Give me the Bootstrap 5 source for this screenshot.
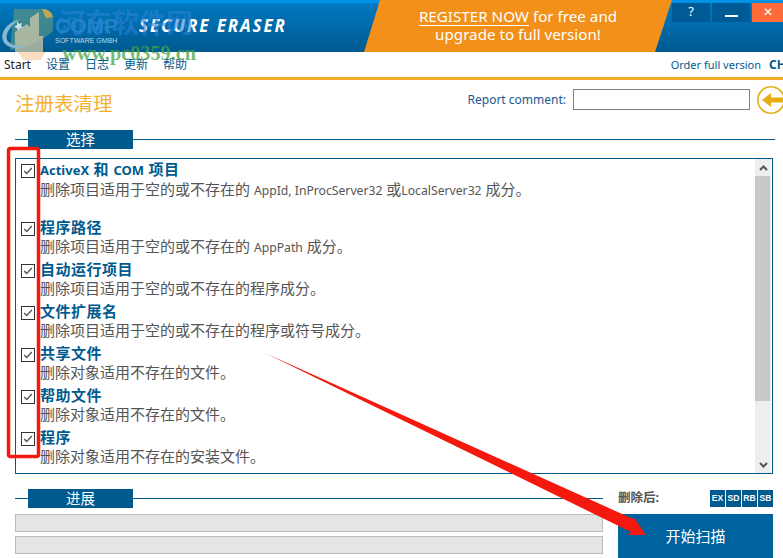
<!DOCTYPE html>
<html lang="zh">
<head>
    <meta charset="UTF-8">
    <meta name="viewport" content="width=device-width, initial-scale=1.0">
    <title>Secure Eraser</title>
    <link href="https://cdn.jsdelivr.net/npm/bootstrap@5.3.0/dist/css/bootstrap.min.css" rel="stylesheet">
    <style>
        body {
            margin: 0;
            background: #fff;
            font-family: "Noto Sans", "Noto Sans CJK SC", sans-serif;
            font-size: 12px;
            color: #555;
        }
        .app-window { width: 783px; height: 558px; overflow: hidden; }

        .top-banner {
            height: 52px;
            background: linear-gradient(#0090e4 0, #0090e4 3px, #0078bf 4px, #005a90 100%);
        }
        .brand-block { width: 364px; padding-left: 55px; }
        .brand-comp { font: bold 21px/1 "Liberation Sans", sans-serif; color: #1f86c6; width: 84px; margin-top: 15px; }
        .brand-sub { font: 7px/1 "Liberation Sans", sans-serif; color: #bcd6e8; margin-top: 1px; white-space: nowrap; }
        .brand-name { font: italic bold 17px/1 "Open Sans", sans-serif; letter-spacing: 1.9px; color: #fff; margin-top: 17px; white-space: nowrap; }
        .promo {
            width: 308px;
            background: #f29019;
            clip-path: polygon(16px 0, 100% 0, 291px 100%, 0 100%);
            color: #fff;
            font-size: 15.2px;
            line-height: 18px;
            text-align: center;
            padding-top: 7px;
        }
        .promo u { text-underline-offset: 3px; text-decoration-thickness: 1px; }
        .win-btns { padding-top: 3px; gap: 2px; flex: 1; }
        .win-btn { width: 38px; height: 19px; background: #005a96; color: #fff; text-align: center; font-size: 13px; line-height: 17px; }
        .win-btn.win-close { width: 31px; background: #ff6a39; font-size: 12px; }
        .win-dash { width: 13px; height: 2px; background: #fff; margin-top: 12px; }

        .menu-strip { height: 28px; border-bottom: 3px solid #f2ac28; padding: 0 0 0 4px; line-height: 25px; }
        .menu-strip a { color: #005a8e; text-decoration: none; width: 39px; }
        .menu-strip a.menu-first { color: #222; width: 42px; }
        .order-link { color: #005a8e; font-size: 11px; margin-left: auto; margin-right: 8px; white-space: nowrap; }
        .lang-code { color: #005a8e; font-weight: 700; width: 14px; overflow: hidden; }

        .title-row { height: 50px; padding: 9px 0 0 15px; }
        .page-title { font-size: 19.5px; line-height: 30px; color: #f5b02e; }
        .report-label { color: #1d5a92; margin-left: auto; line-height: 21px; margin-right: 7px; }
        .report-input { width: 177px; height: 21px; border: 1px solid #808080; margin-right: 6px; }
        .back-icon { margin-top: -3px; flex: none; }

        .sect-head { height: 19px; padding-left: 15px; }
        .sect-line { height: 1px; background: #005a8e; }
        .sect-line.sect-start { width: 13px; }
        .sect-label { width: 105px; height: 19px; line-height: 18px; background: #005a8e; color: #fff; text-align: center; font-size: 14.5px; }

        .items-box { width: 758px; height: 316px; margin: 9px 0 15px 15px; border: 1px solid #005a8e; }
        .items-list { padding: 0 0 0 5px; }
        .scan-item { height: 42px; gap: 5px; }
        .scan-item.scan-tall { height: 58px; }
        .scan-item .form-check-input {
            width: 14px; height: 14px; margin: 5px 0 0 0; flex: none;
            border: 1px solid #333; border-radius: 0; background-color: #fff;
            background-image: url("data:image/svg+xml,%3csvg xmlns='http://www.w3.org/2000/svg' viewBox='0 0 14 14'%3e%3cpath fill='none' stroke='%23555' stroke-width='1.6' d='M2.5 7l3 3 6-6.5'/%3e%3c/svg%3e");
            background-size: 100% 100%;
        }
        .item-name { color: #005a8e; font-weight: 700; font-size: 15px; letter-spacing: .5px; line-height: 20px; white-space: nowrap; }
        .item-name span { font-size: 13px; letter-spacing: 0; }
        .item-desc { color: #555; font-size: 15px; line-height: 18px; white-space: nowrap; }
        .item-desc span { font-size: 12.2px; }

        .fake-scroll { width: 16px; background: #eee; margin-right: 1px; }
        .scroll-end { height: 17px; }
        .scroll-thumb { height: 225px; background: #c8c8c8; width: 15px; }

        .lower-left { width: 588px; margin-left: 15px; }
        .lower-left .sect-head { padding-left: 0; }
        .meter { height: 18px; background: #e5e5e5; border: 1px solid #bbb; margin-top: 4px; }
        .meter-first { margin-top: 6px; }
        .lower-right { width: 155px; margin-left: 15px; }
        .after-row { height: 19px; }
        .after-label { font-weight: 700; font-size: 12.5px; color: #555; }
        .tag-row { gap: 1px; margin-left: auto; }
        .tag-box { width: 15px; height: 17px; background: #005a8e; color: #fff; font: bold 8.5px/17px "Liberation Sans", sans-serif; text-align: center; }
        .scan-btn {
            width: 155px; height: 44px; margin-top: 6px;
            background: #00629f; border: 0; border-radius: 0; color: #fff; font-size: 15px;
        }

        .overlay-wrap { position: relative; }
        .overlay-art { position: absolute; left: 0; top: 0; pointer-events: none; }
        .mark-cn { position: absolute; left: 58px; top: 7px; font-size: 27px; font-weight: 700; line-height: 32px; color: rgba(40, 130, 215, .6); pointer-events: none; white-space: nowrap; }
        .mark-url { position: absolute; left: 62px; top: 41px; font: bold 20.300px/24px "Liberation Serif", serif; color: rgba(70, 165, 70, .75); pointer-events: none; white-space: nowrap; }
    </style>
</head>
<body>
<div class="app-window overlay-wrap">
    <!-- banner -->
    <div class="top-banner d-flex">
        <div class="brand-block d-flex">
            <div>
                <div class="brand-comp">COMP</div>
                <div class="brand-sub">SOFTWARE GMBH</div>
            </div>
            <div class="brand-name">SECURE ERASER</div>
        </div>
        <div class="promo"><u>REGISTER NOW</u> for free and<br>upgrade to full version!</div>
        <div class="win-btns d-flex">
            <div class="win-btn">?</div>
            <div class="win-btn d-flex justify-content-center"><div class="win-dash"></div></div>
            <div class="win-btn win-close">&#10005;</div>
        </div>
    </div>

    <!-- menu -->
    <div class="menu-strip d-flex">
        <a class="menu-first" href="#">Start</a>
        <a href="#">设置</a>
        <a href="#">日志</a>
        <a href="#">更新</a>
        <a href="#">帮助</a>
        <span class="order-link">Order full version</span>
        <span class="lang-code">CH</span>
    </div>

    <div class="title-row d-flex">
        <div class="page-title">注册表清理</div>
        <div class="report-label">Report comment:</div>
        <input class="report-input" type="text">
        <svg class="back-icon" width="27" height="30" viewBox="0 0 27 30">
            <circle cx="15" cy="14" r="13.2" fill="#fff" stroke="#e6ad14" stroke-width="1.6"/>
            <path d="M6 14l9-7v4.500h12v5H15V21z" fill="#e6ad14"/>
        </svg>
    </div>

    <!-- 选择 -->
    <div class="sect-head d-flex align-items-center">
        <div class="sect-line sect-start"></div>
        <div class="sect-label">选择</div>
        <div class="sect-line flex-grow-1 me-2"></div>
    </div>

    <div class="items-box d-flex">
        <div class="items-list flex-grow-1">
            <div class="scan-item scan-tall d-flex">
                <input class="form-check-input" type="checkbox" checked>
                <div>
                    <div class="item-name"><span>ActiveX</span> 和 <span>COM</span> 项目</div>
                    <div class="item-desc">删除项目适用于空的或不存在的 <span>AppId, InProcServer32</span> 或<span>LocalServer32</span> 成分。</div>
                </div>
            </div>
            <div class="scan-item d-flex">
                <input class="form-check-input" type="checkbox" checked>
                <div>
                    <div class="item-name">程序路径</div>
                    <div class="item-desc">删除项目适用于空的或不存在的 <span>AppPath</span> 成分。</div>
                </div>
            </div>
            <div class="scan-item d-flex">
                <input class="form-check-input" type="checkbox" checked>
                <div>
                    <div class="item-name">自动运行项目</div>
                    <div class="item-desc">删除项目适用于空的或不存在的程序成分。</div>
                </div>
            </div>
            <div class="scan-item d-flex">
                <input class="form-check-input" type="checkbox" checked>
                <div>
                    <div class="item-name">文件扩展名</div>
                    <div class="item-desc">删除项目适用于空的或不存在的程序或符号成分。</div>
                </div>
            </div>
            <div class="scan-item d-flex">
                <input class="form-check-input" type="checkbox" checked>
                <div>
                    <div class="item-name">共享文件</div>
                    <div class="item-desc">删除对象适用不存在的文件。</div>
                </div>
            </div>
            <div class="scan-item d-flex">
                <input class="form-check-input" type="checkbox" checked>
                <div>
                    <div class="item-name">帮助文件</div>
                    <div class="item-desc">删除对象适用不存在的文件。</div>
                </div>
            </div>
            <div class="scan-item d-flex">
                <input class="form-check-input" type="checkbox" checked>
                <div>
                    <div class="item-name">程序</div>
                    <div class="item-desc">删除对象适用不存在的安装文件。</div>
                </div>
            </div>
        </div>
        <div class="fake-scroll d-flex flex-column">
            <div class="scroll-end d-flex align-items-center justify-content-center">
                <svg width="9" height="6" viewBox="0 0 9 6"><path d="M1 5l3.500-3.500L8 5" fill="none" stroke="#555" stroke-width="2"/></svg>
            </div>
            <div class="scroll-thumb"></div>
            <div class="scroll-end d-flex align-items-center justify-content-center mt-auto">
                <svg width="9" height="6" viewBox="0 0 9 6"><path d="M1 1l3.500 3.500L8 1" fill="none" stroke="#555" stroke-width="2"/></svg>
            </div>
        </div>
    </div>

    <!-- 进展 -->
    <div class="d-flex">
        <div class="lower-left">
            <div class="sect-head d-flex align-items-center">
                <div class="sect-line sect-start"></div>
                <div class="sect-label">进展</div>
                <div class="sect-line flex-grow-1"></div>
            </div>
            <div class="meter meter-first"></div>
            <div class="meter"></div>
        </div>
        <div class="lower-right">
            <div class="after-row d-flex align-items-center">
                <span class="after-label">删除后:</span>
                <div class="tag-row d-flex">
                    <div class="tag-box">EX</div>
                    <div class="tag-box">SD</div>
                    <div class="tag-box">RB</div>
                    <div class="tag-box">SB</div>
                </div>
            </div>
            <button type="button" class="btn scan-btn">开始扫描</button>
        </div>
    </div>

    <!-- watermark and red annotations on top of the screenshot -->
    <svg class="overlay-art" width="783" height="558" viewBox="0 0 783 558">
        <g opacity=".8">
            <path d="M14 9h28q9 0 11 8v14q-20 18-43 19z" fill="#4f8f8a"/>
            <path d="M42 9q9 0 11 8l-7 1z" fill="#f2b63a"/>
            <path d="M15 52V32l12-8 3 3v-9l9-6v24h4v16z" fill="#f3d9a8" opacity=".8"/>
            <path d="M18 52h27l-4 8H24z" fill="#f8c596" opacity=".75"/>
            <path d="M20 19C6 23 0 33 3 41c3 7 14 9 24 5-9 1-17-1-20-6-2-6 3-14 13-21z" fill="#a9cde0"/>
            <path d="M17 21l2 3 3-1-1 3 2 2h-3l-2 3-1-3-3-1 3-2z" fill="#fff"/>
        </g>
        <rect x="8.500" y="148.500" width="30" height="308" rx="2" fill="none" stroke="#f5180f" stroke-width="3.500"/>
        <path d="M265 353L631 518l4 1 11 16-18 0 3-3z" fill="#f5180f"/>
    </svg>
    <div class="mark-cn">河东软件网</div>
    <div class="mark-url">www.pc0359.cn</div>
</div>
<script src="https://cdn.jsdelivr.net/npm/bootstrap@5.3.0/dist/js/bootstrap.bundle.min.js"></script>
</body>
</html>
